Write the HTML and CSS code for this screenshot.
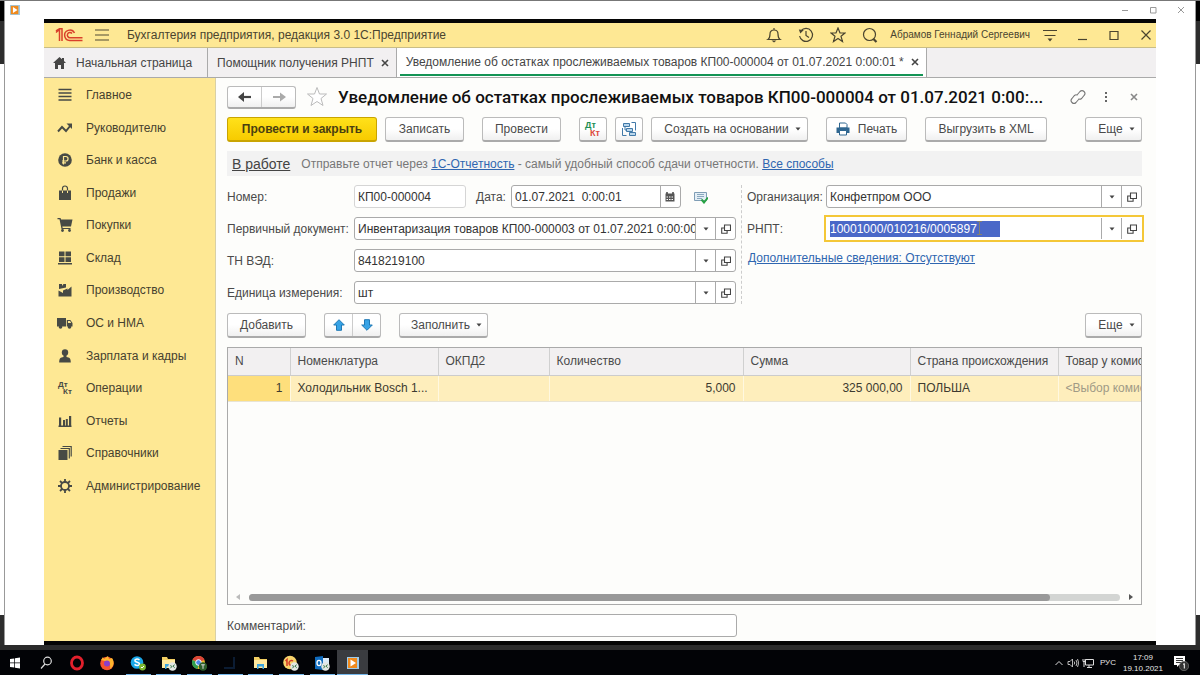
FILE: index.html
```html
<!DOCTYPE html>
<html lang="ru">
<head>
<meta charset="utf-8">
<title>Бухгалтерия предприятия, редакция 3.0</title>
<link rel="stylesheet" href="styles.css">
</head>
<body>
<svg class="defs" aria-hidden="true">
  <symbol id="open" viewBox="0 0 10 10"><path d="M3.5 1h6v5.500h-6zM3.500 4H.7v5.200h5.400V6.500" fill="none" stroke="#444" stroke-width="1.100"/></symbol>
  <symbol id="caret" viewBox="0 0 6 4"><path d="M.5.5h5L3 3.500z" fill="#444"/></symbol>
  <symbol id="cross" viewBox="0 0 8 8"><path d="M1 1l6 6M7 1L1 7" fill="none" stroke="currentColor" stroke-width="1.600"/></symbol>
  <symbol id="folder" viewBox="0 0 16 16"><path d="M1 2h5l1 2h7v9H1z" fill="#f3cf63"/><path d="M1 5h13v8H1z" fill="#ffe9a0"/><path d="M4 9h7v5H9.500v-2.500h-4V14H4z" fill="#3ba4e0"/></symbol>
  <symbol id="badge" viewBox="0 0 10 10"><circle cx="5" cy="5" r="4.700" fill="#e3e6e3"/><path d="M2.500 4l2 1-2 2M7.500 3l-2 1.500 2 2" fill="none" stroke="#3c7a4c" stroke-width="1.100"/></symbol>
  <symbol id="player" viewBox="0 0 12 12"><path d="M0 0h12v12H0z" fill="#9fcbe8"/><path d="M1 1h9v10H1z" fill="#f08a1d"/><path d="M3.500 2.500L9 6 3.500 9.500z" fill="#fff"/></symbol>
</svg>
<div class="desktop">
  <div class="edge"></div>
  <section class="player">
    <header class="player-bar">
      <svg class="i10"><use href="#player"/></svg>
      <span class="grow"></span>
      <button class="plain" aria-label="Свернуть плеер"><svg viewBox="0 0 8 8" class="i8"><path d="M1 4.500h6" stroke="#999"/></svg></button>
      <button class="plain" aria-label="Развернуть плеер"><svg viewBox="0 0 8 8" class="i8"><path d="M1.500 1.500h5.500V7H1.500z" fill="none" stroke="#999"/></svg></button>
      <button class="plain" aria-label="Закрыть плеер"><svg viewBox="0 0 8 8" class="i8"><path d="M1 1l6 6M7 1L1 7" stroke="#999"/></svg></button>
    </header>
    <div class="app">
      <header class="titlebar">
        <svg class="logo" viewBox="0 0 28 14"><g fill="none" stroke="#d9402b" stroke-width="1.500"><path d="M1 4.500L4.500 1.500V13M7 13V.8H4.500L1 3"/><path d="M19.500 5A5.200 5.200 0 1 0 15 12.500H27.500"/><path d="M17 5.500A2.600 2.600 0 1 0 15 9.700H27.500"/></g></svg>
        <button class="plain menu" aria-label="Меню"><svg viewBox="0 0 14 12" class="i14"><path d="M0 1h14M0 6h14M0 11h14" stroke="#514a35" stroke-width="1.200"/></svg></button>
        <h1>Бухгалтерия предприятия, редакция 3.0 1С:Предприятие</h1>
        <div class="tools">
          <button class="plain" aria-label="Уведомления"><svg viewBox="0 0 16 16" class="i16"><path d="M2 12.500c1.500-1 2-2 2-5.500 0-2.500 1.500-4 4-4s4 1.500 4 4c0 3.500.5 4.500 2 5.500zM8 3V1" class="ln"/><path d="M5.500 13.500h5L8 15.500z" fill="#4a442f"/></svg></button>
          <button class="plain" aria-label="История"><svg viewBox="0 0 16 16" class="i16"><path d="M3 3.800A6.500 6.500 0 1 1 1.600 9M8 4v4.500l3 2" class="ln"/><path d="M.8 2.500l5 .5-3.500 3.500z" fill="#4a442f"/></svg></button>
          <button class="plain" aria-label="Избранное"><svg viewBox="0 0 16 16" class="i16"><path d="M8 1l2 5h5l-4 3.200 1.500 5.300L8 11.500l-4.500 3L5 9.200 1 6h5z" class="ln"/></svg></button>
          <button class="plain" aria-label="Поиск"><svg viewBox="0 0 16 16" class="i16"><circle cx="7.500" cy="7.500" r="6" class="ln"/><path d="M11.500 12l3 3" stroke="#4a442f" stroke-width="2.200"/></svg></button>
        </div>
        <a class="user" href="#">Абрамов Геннадий Сергеевич</a>
        <div class="wins">
          <button class="plain" aria-label="Сервис"><svg viewBox="0 0 16 16" class="i16"><path d="M1 3.500h14M2.500 8.500h11" class="ln"/><path d="M5.500 11.500h5L8 14.500z" fill="#4a442f"/></svg></button>
          <button class="plain" aria-label="Свернуть"><svg viewBox="0 0 16 16" class="i16"><path d="M4 12.500h9" class="ln"/></svg></button>
          <button class="plain" aria-label="Развернуть"><svg viewBox="0 0 16 16" class="i16"><path d="M4 4.500h8v8H4z" class="ln"/></svg></button>
          <button class="plain" aria-label="Закрыть"><svg viewBox="0 0 16 16" class="i16"><path d="M3.500 3.500l9 9M12.500 3.500l-9 9" class="ln"/></svg></button>
        </div>
      </header>
      <nav class="tabs">
        <a href="#" class="tab home"><svg viewBox="0 0 13 12" class="i13"><path d="M6.500 0L0 6h2v6h3V8h3v4h3V6h2l-2-2V1H9v1.200z" fill="#454545"/></svg>Начальная страница</a>
        <a href="#" class="tab second">Помощник получения РНПТ<svg class="i8"><use href="#cross"/></svg></a>
        <a href="#" class="tab current"><span>Уведомление об остатках прослеживаемых товаров КП00-000004 от 01.07.2021 0:00:01 *<svg class="i8"><use href="#cross"/></svg></span></a>
      </nav>
      <div class="body">
        <nav class="side">
          <a href="#"><svg viewBox="0 0 16 16"><path d="M1.500 2.500h13M1.500 6h13M1.500 9.500h13M1.500 13h13" stroke="#474a45" stroke-width="1.700"/></svg>Главное</a>
          <a href="#"><svg viewBox="0 0 16 16"><path d="M1 11.500l4-4.500 4 4 4.500-5.500" fill="none" stroke="#474a45" stroke-width="1.900"/><path d="M9.500 3.500h5.500v5.500z" fill="#474a45"/></svg>Руководителю</a>
          <a href="#"><svg viewBox="0 0 16 16"><circle cx="8" cy="8" r="6.800"/><path d="M6.500 12.500v-8h2.300a2.200 2.200 0 0 1 0 4.500H5M5 10.800h4" fill="none" stroke="#fee894" stroke-width="1.200"/></svg>Банк и касса</a>
          <a href="#"><svg viewBox="0 0 16 16"><path d="M2 5.500h12V15H2z"/><path d="M5.500 8V3.500a2.500 2.500 0 0 1 5 0V8" fill="none" stroke="#474a45" stroke-width="1.200"/><path d="M5.500 5.500v2.500M10.500 5.500v2.500" stroke="#fee894"/></svg>Продажи</a>
          <a href="#"><svg viewBox="0 0 16 16"><path d="M.5 1h3l.6 1.500H15.500l-1.500 7H5.300l.4 1.500H13.500v1H4.500L2.500 2.300H.5z"/><circle cx="5.500" cy="13.500" r="1.400"/><circle cx="12.500" cy="13.500" r="1.400"/></svg>Покупки</a>
          <a href="#"><svg viewBox="0 0 16 16"><path d="M2 1.500h5.500v4.700H2zM8.500 1.500H14v4.700H8.500zM2 7.200h5.500V12H2zM8.500 7.200H14V12H8.500zM1 13h14v1.500H1z"/></svg>Склад</a>
          <a href="#"><svg viewBox="0 0 16 16"><path d="M1.500 14.500V8.500L6 11V8.500l4.500-2V8L14.500 4.500v10zM2 2h3v2l1.500-2H9v3.500L2 7z"/></svg>Производство</a>
          <a href="#"><svg viewBox="0 0 16 16"><path d="M0 3h9v8.500H0zM9.800 5h3.500L15.500 8v3.500H9.800z"/><circle cx="3.500" cy="12" r="1.800"/><circle cx="12.500" cy="12" r="1.800"/><path d="M11 6h2l1.200 2H11z" fill="#fee894"/></svg>ОС и НМА</a>
          <a href="#"><svg viewBox="0 0 16 16"><circle cx="8" cy="4.500" r="3.200"/><path d="M6.500 7h3v2c3 .3 4.300 1.500 4.300 5.500H2.200C2.200 10.500 3.500 9.300 6.500 9z"/></svg>Зарплата и кадры</a>
          <a href="#"><svg viewBox="0 0 16 16"><text x="1" y="7" class="dk">Дт</text><text x="6" y="14" class="dk">Кт</text></svg>Операции</a>
          <a href="#"><svg viewBox="0 0 16 16"><path d="M2 4.500h2.200V13H2zM6 7h2v6H6zM8.800 6H10.800v7H8.800zM12 3h2.200v10H12zM1.500 12.500h13V14h-13z"/></svg>Отчеты</a>
          <a href="#"><svg viewBox="0 0 16 16"><path d="M1.500 5h9v10h-9z"/><path d="M3.500 3.500h8.800v10M5.500 1.500h8.700v10" fill="none" stroke="#474a45" stroke-width="1.200"/></svg>Справочники</a>
          <a href="#"><svg viewBox="0 0 16 16"><circle cx="8" cy="8" r="4" fill="none" stroke="#474a45" stroke-width="1.800"/><path d="M8 1v3M8 12v3M1 8h3M12 8h3M3 3l2.200 2.200M10.800 10.800L13 13M13 3l-2.200 2.200M5.200 10.800L3 13" stroke="#474a45" stroke-width="1.800"/></svg>Администрирование</a>
        </nav>
        <main class="main">
          <div class="head">
            <div class="pair nav"><button aria-label="Назад"><svg viewBox="0 0 14 10" class="i14"><path d="M2 5h11" stroke="#444" stroke-width="2.200"/><path d="M6 0v10L0 5z" fill="#444"/></svg></button><button aria-label="Вперед"><svg viewBox="0 0 14 10" class="i14"><path d="M1 5h11" stroke="#aaa" stroke-width="2"/><path d="M8 .5v9L14 5z" fill="#aaa"/></svg></button></div>
            <button class="plain" aria-label="В избранное"><svg viewBox="0 0 22 22" class="i22"><path d="M11 1.500l2.500 6.500h7l-5.500 4.500 2 7L11 15.500 5 19.500l2-7L1.500 8h7z" fill="#fff" stroke="#bbb"/></svg></button>
            <h2>Уведомление об остатках прослеживаемых товаров КП00-000004 от 01.07.2021 0:00:...</h2>
            <div class="head-tools">
              <button class="plain" aria-label="Ссылка"><svg viewBox="0 0 16 16" class="i16"><path d="M7 6l3-3.500a2.800 2.800 0 0 1 4 4L11.500 9.500a2.500 2.500 0 0 1-3 .3M9 10l-3 3.500a2.800 2.800 0 0 1-4-4L4.500 6.500a2.500 2.500 0 0 1 3-.3" fill="none" stroke="#777" stroke-width="1.100"/></svg></button>
              <button class="plain" aria-label="Действия"><svg viewBox="0 0 16 16" class="i16"><path d="M7 3h2v2H7zM7 7h2v2H7zM7 11h2v2H7z" fill="#666"/></svg></button>
              <button class="plain gray" aria-label="Закрыть документ"><svg class="i8"><use href="#cross"/></svg></button>
            </div>
          </div>
          <div class="cmds">
            <button class="btn primary">Провести и закрыть</button>
            <button class="btn w79">Записать</button>
            <button class="btn w79 far">Провести</button>
            <button class="btn sq far" aria-label="Дт Кт"><svg viewBox="0 0 18 18" class="i18"><text x="1" y="8" class="dk green">Дт</text><text x="6" y="16" class="dk red">Кт</text></svg></button>
            <button class="btn sq" aria-label="Структура подчиненности"><svg viewBox="0 0 16 16" class="i16"><g fill="#b9d6ec" stroke="#4179a8"><path d="M2.500 2.500h6v3h-6zM5.500 7.500h6v3h-6zM8.500 11.500h6v3h-6z"/><path d="M10.500 1.500h4v8M1.500 7v7.500h4M4 5.500V9h1.500" fill="none"/></g></svg></button>
            <button class="btn drop w157">Создать на основании<svg class="car"><use href="#caret"/></svg></button>
            <button class="btn far w81"><svg viewBox="0 0 14 14" class="i14"><path d="M3.500 1h6l1.500 1.500V6h-7.500z" fill="#fff" stroke="#2f6690"/><path d="M.5 5.500h13v5.500H.5z" fill="#2f6690"/><path d="M3.500 8.500h7v4.500h-7z" fill="#fff" stroke="#2f6690"/></svg>Печать</button>
            <button class="btn far w122">Выгрузить в XML</button>
            <button class="btn drop end w57">Еще<svg class="car"><use href="#caret"/></svg></button>
          </div>
          <p class="status"><a href="#" class="state">В работе</a><span>Отправьте отчет через <a href="#">1С-Отчетность</a> - самый удобный способ сдачи отчетности. <a href="#">Все способы</a></span></p>
          <form class="form">
            <div class="col left">
              <div class="line"><label for="num">Номер:</label><div class="field short"><input id="num" value="КП00-000004" readonly></div><label for="date" class="auto">Дата:</label><div class="field date"><input id="date" value="01.07.2021  0:00:01"><button type="button" aria-label="Календарь"><svg viewBox="0 0 10 10" class="i10"><path d="M.5 1.500h9v8h-9z" fill="#555"/><path d="M2 0v2M8 0v2" stroke="#444" stroke-width="1.500"/><path d="M1.500 5h7M1.500 7.500h7" stroke="#fff" stroke-dasharray="1.500 1"/></svg></button></div><svg viewBox="0 0 14 14" class="i14 posted"><path d="M.5 2.500h12v8H.5z" fill="#e4eef5" stroke="#7f9db5"/><path d="M3 4.500h7M3 6.500h7M3 8.500h5" stroke="#8aa8bf"/><path d="M7.500 9.500l2.500 3 4-5" fill="none" stroke="#28a244" stroke-width="2"/></svg></div>
              <div class="line"><label for="doc">Первичный документ:</label><div class="field"><input id="doc" value="Инвентаризация товаров КП00-000003 от 01.07.2021 0:00:00"><button type="button" aria-label="Выбрать документ"><svg class="car"><use href="#caret"/></svg></button><button type="button" aria-label="Открыть документ"><svg class="i10"><use href="#open"/></svg></button></div></div>
              <div class="line"><label for="tn">ТН ВЭД:</label><div class="field"><input id="tn" value="8418219100"><button type="button" aria-label="Выбрать код"><svg class="car"><use href="#caret"/></svg></button><button type="button" aria-label="Открыть код"><svg class="i10"><use href="#open"/></svg></button></div></div>
              <div class="line"><label for="unit">Единица измерения:</label><div class="field"><input id="unit" value="шт"><button type="button" aria-label="Выбрать единицу"><svg class="car"><use href="#caret"/></svg></button><button type="button" aria-label="Открыть единицу"><svg class="i10"><use href="#open"/></svg></button></div></div>
            </div>
            <div class="col right">
              <div class="line"><label for="org">Организация:</label><div class="field"><input id="org" value="Конфетпром ООО"><button type="button" aria-label="Выбрать организацию"><svg class="car"><use href="#caret"/></svg></button><button type="button" aria-label="Открыть организацию"><svg class="i10"><use href="#open"/></svg></button></div></div>
              <div class="line"><label for="rnpt">РНПТ:</label><div class="field active"><input id="rnpt" value="10001000/010216/0005897       "><svg viewBox="0 0 7 14" class="beam"><path d="M1 .5h5M3.500.5v13M1 13.500h5" stroke="#85806c" fill="none"/></svg><button type="button" aria-label="Выбрать РНПТ"><svg class="car"><use href="#caret"/></svg></button><button type="button" aria-label="Открыть РНПТ"><svg class="i10"><use href="#open"/></svg></button></div></div>
              <div class="line extra"><a href="#">Дополнительные сведения: Отсутствуют</a></div>
            </div>
          </form>
          <div class="cmds">
            <button class="btn w79">Добавить</button>
            <div class="pair far"><button aria-label="Вверх"><svg viewBox="0 0 12 12" class="i12"><path d="M6 .7L11.300 6H8.500v5.300h-5V6H.7z" fill="#37a3e6" stroke="#1f78b4"/></svg></button><button aria-label="Вниз"><svg viewBox="0 0 12 12" class="i12"><path d="M6 11.300L.7 6h2.800V.7h5V6h2.800z" fill="#37a3e6" stroke="#1f78b4"/></svg></button></div>
            <button class="btn drop far w89">Заполнить<svg class="car"><use href="#caret"/></svg></button>
            <button class="btn drop end w57">Еще<svg class="car"><use href="#caret"/></svg></button>
          </div>
          <div class="grid">
            <table>
              <colgroup><col class="c1"><col class="c2"><col class="c3"><col class="c4"><col class="c5"><col class="c6"><col></colgroup>
              <thead><tr><th>N</th><th>Номенклатура</th><th>ОКПД2</th><th>Количество</th><th>Сумма</th><th>Страна происхождения</th><th>Товар у комиссионера</th></tr></thead>
              <tbody><tr><td class="num now">1</td><td>Холодильник Bosch 1...</td><td></td><td class="num">5,000</td><td class="num">325 000,00</td><td>ПОЛЬША</td><td class="hint">&lt;Выбор комиссионера&gt;</td></tr></tbody>
            </table>
            <div class="scroll"><svg viewBox="0 0 4 6" class="arr"><path d="M4 0v6L0 3z" fill="#bbb"/></svg><div class="track"><div class="thumb"></div></div><svg viewBox="0 0 4 6" class="arr"><path d="M0 0v6l4-3z" fill="#555"/></svg></div>
          </div>
          <div class="line comment"><label for="com">Комментарий:</label><div class="field"><input id="com"></div></div>
        </main>
      </div>
    </div>
  </section>
  <div class="edge right-edge"></div>
</div>
<footer class="taskbar">
  <div class="apps">
    <button aria-label="Пуск"><svg viewBox="0 0 16 16" class="i16"><path d="M3 4l4.300-.6v4.200H3zM8 3.300l5-.8v5.100H8zM3 8.300h4.300v4.300L3 12zM8 8.300h5v5.200l-5-.8z" fill="#fff"/></svg></button>
    <button aria-label="Поиск Windows"><svg viewBox="0 0 16 16" class="i16"><circle cx="9.500" cy="6" r="3.800" fill="none" stroke="#ddd" stroke-width="1.200"/><path d="M7 9l-4 4.500" stroke="#ddd" stroke-width="1.200"/></svg></button>
    <button aria-label="Opera"><svg viewBox="0 0 16 16" class="i16"><ellipse cx="8" cy="8" rx="5.500" ry="6" fill="none" stroke="#e2202c" stroke-width="2.800"/></svg></button>
    <button aria-label="Firefox"><svg viewBox="0 0 16 16" class="i16"><circle cx="8" cy="8.500" r="6.800" fill="#f6532f"/><path d="M2 5l2-3 1 2 4-3 1 3 3-1c3 4 1.500 9-2 11 1-5-1-8-5-8z" fill="#ffb52e"/><circle cx="8" cy="8.500" r="3" fill="#8a3ecb"/></svg></button>
    <button class="run" aria-label="Skype"><svg viewBox="0 0 16 16" class="i16"><circle cx="7" cy="7.500" r="6.300" fill="#1aa7e8"/><path d="M9.500 5C7 3 4.500 4.500 5 6s4.500 1.300 4.500 3-3 2-5 .3" fill="none" stroke="#fff" stroke-width="1.600"/><circle cx="12.500" cy="12" r="3.400" fill="#7db72f"/><path d="M11 12l1 1 2-2" fill="none" stroke="#fff"/></svg></button>
    <button class="run" aria-label="Проводник"><svg viewBox="0 0 16 16" class="i16"><use href="#folder"/><use href="#badge" x="7" y="7" width="9" height="9"/></svg></button>
    <button class="run" aria-label="Chrome"><svg viewBox="0 0 16 16" class="i16"><circle cx="7.500" cy="7.500" r="6.500" fill="#e9bb28"/><path d="M1.500 5a6.500 6.500 0 0 1 12 0L7.500 7z" fill="#dc4437"/><path d="M1.500 5a6.500 6.500 0 0 0 5 9l1.500-6z" fill="#2f9e4f"/><circle cx="7.500" cy="7.500" r="2.800" fill="#4b87e8" stroke="#fff"/><circle cx="12" cy="11.500" r="4.200" fill="#2c5e2a"/><path d="M10.200 9.800h3.600M12 9.800v4" stroke="#ddd"/></svg></button>
    <button class="run" aria-label="Приложение"><svg viewBox="0 0 16 16" class="i16"><path d="M13 2v12H2v-2h9V2z" fill="#0b1c33"/></svg></button>
    <button class="run" aria-label="Папка"><svg class="i16"><use href="#folder"/></svg></button>
    <button class="run" aria-label="1С"><svg viewBox="0 0 16 16" class="i16"><circle cx="7" cy="7.500" r="6.800" fill="#f7d36b"/><path d="M2.500 6l1.500-1.500V11M10 6a2.500 2.500 0 1 0-1.500 4.500H12" fill="none" stroke="#d33a26" stroke-width="1.500"/><use href="#badge" x="7" y="7" width="9" height="9"/></svg></button>
    <button class="run" aria-label="Outlook"><svg viewBox="0 0 16 16" class="i16"><path d="M7 3h8v9H7z" fill="#dcebf8"/><path d="M1 2l8-1v14l-8-1z" fill="#0f6bbd"/><ellipse cx="5" cy="8" rx="2" ry="2.600" fill="none" stroke="#fff" stroke-width="1.300"/><use href="#badge" x="7" y="7" width="9" height="9"/></svg></button>
    <button class="run on" aria-label="Плеер"><svg class="i12"><use href="#player"/></svg></button>
  </div>
  <div class="tray">
    <svg viewBox="0 0 10 10" class="i10"><path d="M1.500 7L5 3.500 8.500 7" fill="none" stroke="#ddd"/></svg>
    <svg viewBox="0 0 12 12" class="i12"><path d="M1 4.500h2L5.500 2v8L3 7.500H1zM7.200 4.500q1 1.500 0 3M9 3q2 3 0 6M10.500 2q2.500 4 0 8" fill="none" stroke="#ccc" stroke-width=".9"/></svg>
    <svg viewBox="0 0 12 12" class="i12"><path d="M3.500 2.500h8v5.500h-8zM7 8v2.500M5 10.500h5M1 2v2.500h2V2M2 4.500V10" fill="none" stroke="#ddd"/></svg>
    <span>РУС</span>
    <time>17:09<br>19.10.2021</time>
    <svg viewBox="0 0 16 16" class="i16"><path d="M1 1h11v9H6l-2 2v-2H1z" fill="#fff"/><path d="M3 3.500h7M3 5.500h7M3 7.500h5" stroke="#222" stroke-width=".9"/><circle cx="11" cy="11" r="4.700" fill="#333" stroke="#888" stroke-width=".6"/><path d="M10 9.500l1.300-1V13.500" fill="none" stroke="#fff"/></svg>
  </div>
</footer>
<script src="app.js"></script>
</body>
</html>
```
FILE: styles.css
```css
* { box-sizing: border-box; }
body { margin: 0; min-height: 100vh; display: flex; flex-direction: column; font: 12px/16px "Liberation Sans", Arial, sans-serif; color: #4a4a4a; background: #2b2b2b; }
button, input { font: inherit; color: inherit; }
button { padding: 0; margin: 0; }
svg { display: block; flex: none; }
h1, h2, p { margin: 0; font-weight: normal; }
a { color: #2f66b0; }
.defs { position: absolute; width: 0; height: 0; }
.i8 { width: 8px; height: 8px; }
.i10 { width: 10px; height: 10px; }
.i12 { width: 12px; height: 12px; }
.i13 { width: 13px; height: 12px; }
.i14 { width: 14px; height: 14px; }
.i16 { width: 16px; height: 16px; }
.i18 { width: 18px; height: 18px; }
.i22 { width: 22px; height: 22px; }
.car { width: 6px; height: 4px; }
.plain { border: 0; background: none; display: flex; align-items: center; justify-content: center; }
.ln { fill: none; stroke: #4a442f; stroke-width: 1.2; }
.dk { font: bold 8px "Liberation Sans", Arial, sans-serif; fill: #474a45; }
.dk.green { font-size: 9px; fill: #1f8f55; }
.dk.red { font-size: 9px; fill: #dd4a3c; }
.grow { flex: 1; }

.desktop { flex: 1; display: flex; padding-bottom: 5px; border-top: 1px solid #777; }
.edge { width: 5px; border-right: 1px solid #999; background: linear-gradient(#000 20px, #2d2d2d 20px, #2d2d2d 63px, #fff 63px, #fff calc(100% - 30px), #2d2d2d calc(100% - 30px)); }
.right-edge { border-right: 0; border-left: 1px solid #999; }
.player { flex: 1; min-width: 0; display: flex; flex-direction: column; background: #fff; }
.player-bar { height: 18px; display: flex; align-items: center; gap: 20px; padding: 0 10px 0 5px; }
.app { flex: 1; display: flex; flex-direction: column; margin: 0 39px; border-top: 4px solid #050505; border-bottom: 4px solid #050505; background: #fdfdfb; }

.titlebar { height: 25px; display: flex; align-items: center; padding-right: 2px; padding-left: 11px; background: #fee894; border-bottom: 1px solid #c9bd86; color: #4a442f; }
.logo { width: 28px; height: 14px; }
.menu { margin: 0 18px 0 12px; }
h1 { font-size: 12px; }
.tools { margin-left: auto; display: flex; gap: 16px; }
.user { margin: 0 12px; font-size: 10px; color: inherit; text-decoration: none; }
.wins { display: flex; gap: 16px; }

.tabs { height: 30px; display: flex; background: #f2f0f1; border-bottom: 1px solid #aaa; }
.tab { display: flex; align-items: center; padding: 0 9px; border-right: 1px solid #aaa; color: #454545; text-decoration: none; }
.tab.home { gap: 10px; padding-right: 15px; }
.tab.second { gap: 7px; padding-right: 7px; }
.tab.current { padding: 0 3px; background: #fff; }
.tab.current span { display: flex; align-items: center; gap: 7px; height: 27px; padding: 0 4px 0 6px; border-bottom: 2px solid #149455; }

.body { flex: 1; display: flex; }
.side { width: 172px; flex: none; display: flex; flex-direction: column; justify-content: space-between; padding: 5px 0 143px 13px; background: #fee894; border-right: 1px solid #d9d0a5; }
.side a { height: 24px; display: flex; align-items: center; gap: 13px; color: #46412f; text-decoration: none; }
.side svg { width: 16px; height: 16px; fill: #474a45; }

.main { flex: 1; min-width: 0; display: flex; flex-direction: column; gap: 9px; padding: 8px 14px 4px 11px; }
.head { height: 22px; display: flex; align-items: center; gap: 10px; }
h2 { flex: 1; min-width: 0; font: 500 17px/22px Roboto, sans-serif; color: #111; white-space: nowrap; overflow: hidden; text-overflow: ellipsis; }
.head-tools { display: flex; gap: 12px; }
.gray { width: 16px; color: #888; }

.btn, .pair { height: 25px; border: 1px solid #bbb; border-bottom: 2px solid #aaa; border-radius: 3px; background: linear-gradient(#fff 50%, #f0f0f0); }
.btn { display: flex; align-items: center; justify-content: center; gap: 8px; }
.cmds { display: flex; gap: 8px; }
.far { margin-left: 10px; }
.end { margin-left: auto; }
.drop { gap: 6px; padding-left: 6px; }
.primary { width: 150px; border-color: #c9a400; background: linear-gradient(#ffe11a, #f7cb00); font-weight: bold; color: #4a3f10; }
.sq { width: 28px; }
.w57 { width: 57px; }
.w79 { width: 79px; }
.w81 { width: 81px; }
.w89 { width: 89px; }
.w122 { width: 122px; }
.w157 { width: 157px; }
.pair { width: 57px; display: flex; }
.pair button { flex: 1; border: 0; background: none; display: flex; align-items: center; justify-content: center; }
.pair button + button { border-left: 1px solid #ccc; }
.pair.nav { width: 69px; height: 23px; }

.status { height: 25px; display: flex; align-items: center; gap: 11px; padding: 0 5px; background: #f2f2f2; color: #777; }
.status .state { font-size: 14px; color: #444; }

.form { display: grid; grid-template-columns: 515fr 400fr; }
.col { display: flex; flex-direction: column; gap: 9px; }
.left { padding-right: 5px; border-right: 1px dashed #ccc; }
.right { padding-left: 5px; }
.line { display: flex; align-items: center; height: 23px; }
.line label { width: 127px; flex: none; white-space: nowrap; }
.line label.auto { width: auto; margin: 0 5px 0 10px; }
.right .line label { width: 79px; }
.field { flex: 1; min-width: 0; height: 23px; display: flex; position: relative; border: 1px solid #aaa; border-radius: 3px; background: #fff; }
.field.short { flex: 0 1 112px; border-color: #d5d5d5; }
.field.date { flex: 0 1 170px; }
.field input { flex: 1; min-width: 0; width: 0; border: 0; padding: 0 0 0 3px; background: none; outline: 0; color: #333; white-space: pre; }
.field button { width: 20px; border: 0; border-left: 1px solid #aaa; background: none; display: flex; align-items: center; justify-content: center; }
.field.active { border-color: transparent; border-radius: 0; outline: 2px solid #f4c737; }
.field.active input::selection { background: #4a68c8; color: #fff; }
.beam { position: absolute; left: 149px; top: 3px; width: 7px; height: 14px; }
.posted { margin-left: 13px; }
.line.extra { height: 18px; }
.extra a { margin-left: 1px; }

.grid { flex: 1; display: flex; flex-direction: column; overflow: hidden; border: 1px solid #aaa; }
table { width: 100%; table-layout: fixed; border-collapse: collapse; }
.c1 { width: 62px; } .c2 { width: 148px; } .c3 { width: 111px; } .c4 { width: 194px; } .c5 { width: 167px; } .c6 { width: 148px; }
th, td { padding: 0 7px; font-weight: normal; text-align: left; white-space: nowrap; overflow: hidden; }
th { height: 27px; background: #f2f0f1; border-right: 1px solid #d0d0d0; border-bottom: 1px solid #ccc; }
td { height: 26px; background: #feeebc; border-right: 1px solid #fff8e0; border-bottom: 1px solid #e8e4d4; color: #3d3a30; }
th:last-child, td:last-child { padding-right: 0; border-right: 0; }
td.num { text-align: right; }
td.now { background: #fedf7c; }
td.hint { color: #a09a86; }
.scroll { margin-top: auto; height: 14px; display: flex; align-items: center; gap: 9px; padding: 0 8px; }
.arr { width: 4px; height: 6px; }
.track { flex: 1; height: 7px; border-radius: 4px; background: #d3d5d3; }
.thumb { width: 92%; height: 7px; border-radius: 4px; background: #999; }
.comment .field { flex: 0 1 383px; }

.taskbar { height: 25px; display: flex; justify-content: space-between; background: #020306; color: #e5e5e5; font: 8px/11px "Liberation Sans", Arial, sans-serif; }
.apps { width: 368px; display: flex; }
.apps button { flex: 1; border: 0; background: none; display: flex; align-items: center; justify-content: center; }
.apps .run { background: linear-gradient(#76b9ed, #76b9ed) center bottom / 25px 1px no-repeat; }
.apps .on { background: linear-gradient(#76b9ed, #76b9ed) center bottom / 100% 1px no-repeat #3a3c40; }
.tray { display: flex; align-items: center; gap: 3px; padding-right: 11px; }
.tray span { margin-left: 3px; }
.tray time { margin: 0 7px 0 4px; text-align: center; }
```
FILE: app.js
```js
const field = document.getElementById("rnpt");
field.focus();
field.select();
```
